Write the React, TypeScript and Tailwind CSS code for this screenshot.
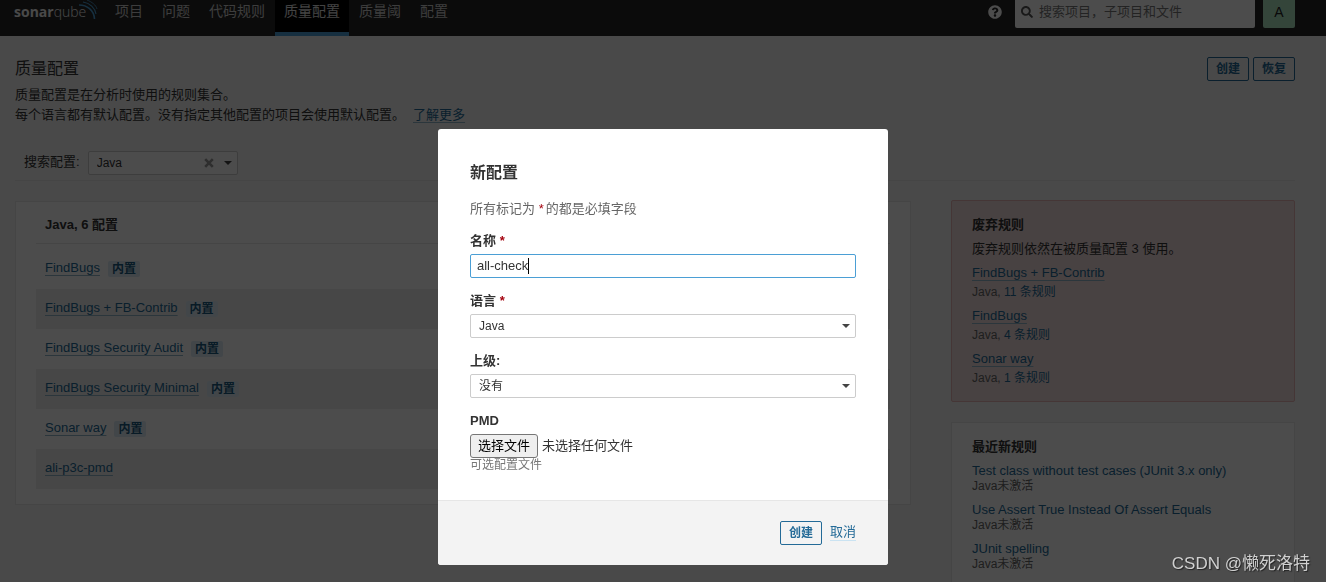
import { FaQuestionCircle, FaSearch } from "react-icons/fa";

const navItems = ["项目", "问题", "代码规则", "质量配置", "质量阈", "配置"];

const profiles = [
  { name: "FindBugs", builtIn: true },
  { name: "FindBugs + FB-Contrib", builtIn: true },
  { name: "FindBugs Security Audit", builtIn: true },
  { name: "FindBugs Security Minimal", builtIn: true },
  { name: "Sonar way", builtIn: true },
  { name: "ali-p3c-pmd", builtIn: false },
];

const deprecated = [
  { name: "FindBugs + FB-Contrib", rules: 11 },
  { name: "FindBugs", rules: 4 },
  { name: "Sonar way", rules: 1 },
];

const latestRules = [
  "Test class without test cases (JUnit 3.x only)",
  "Use Assert True Instead Of Assert Equals",
  "JUnit spelling",
];

export default function App() {
  return (
    <div className="h-screen overflow-hidden bg-[#f3f3f3] font-['Liberation_Sans','Noto_Sans_CJK_SC',sans-serif] text-[13px] leading-5 text-[#333]">
      <Navbar />
      <main className="pt-[21px] pr-[31px] pl-[15px]">
        <PageHeader />
        <div className="flex items-center border-b border-[#e6e6e6] pt-[26px] pb-[5px] pl-[9px]">
          <label htmlFor="search-language" className="mr-2 pb-0.5">搜索配置:</label>
          <div className="flex h-6 w-[150px] items-center rounded-xs border border-[#ccc] bg-white pr-[5px] pl-2">
            <select id="search-language" className="min-w-0 flex-1 appearance-none text-xs outline-none">
              <option>Java</option>
            </select>
            <button type="button" aria-label="清除" className="mr-2.5 text-[#999]">
              <svg width="10" height="10" viewBox="0 0 10 10" fill="none" stroke="currentColor" strokeWidth="2.6">
                <path d="M1.2 1.2L8.8 8.8M8.8 1.2L1.2 8.8" />
              </svg>
            </button>
            <Caret />
          </div>
        </div>
        <div className="mt-[19px] flex items-start gap-10">
          <ProfileList />
          <aside className="w-[344px] shrink-0 space-y-5">
            <DeprecatedRules />
            <LatestRules />
          </aside>
        </div>
      </main>
      <div className="fixed inset-0 flex items-start justify-center bg-black/70 pt-[129px]">
        <CreateDialog />
      </div>
      <div className="fixed right-4 bottom-1.5 text-[17px] leading-6 text-[#d0d0d0] text-shadow-[1px_1px_1px_#222]">
        CSDN @懒死洛特
      </div>
    </div>
  );
}

function Navbar() {
  return (
    <header className="-mt-3 flex h-12 items-center bg-[#262626] pr-[31px] pl-3.5">
      <a href="#" aria-label="sonarqube" className="flex w-[92px] items-center font-['Open_Sans',sans-serif] text-sm text-[#f4f4f4]">
        <span className="font-bold">sonar</span>
        <span className="font-light">qube</span>
        <svg width="20" height="24" viewBox="0 0 20 24" className="-ml-2 mb-2 shrink-0" fill="none" stroke="#4b9fd5">
          <path d="M1 9C9 9 16 14 16.5 23" strokeWidth="1.6" />
          <path d="M5 6C12 7 17 12 18 18" strokeWidth="1.1" />
          <path d="M9 4C14 6 18 9 19 13" strokeWidth="0.8" />
        </svg>
      </a>
      <nav className="flex h-full gap-px text-sm">
        {navItems.map((item) => (
          <a
            key={item}
            href="#"
            className={
              item === "质量配置"
                ? "flex items-center border-b-4 border-[#4b9fd5] bg-black px-[9px] pt-0.5 text-[#e1e1e1]"
                : "flex items-center px-[9px] pb-0.5 text-[#ccc]"
            }
          >
            {item}
          </a>
        ))}
      </nav>
      <button type="button" aria-label="帮助" className="ml-auto text-white">
        <FaQuestionCircle size={14} />
      </button>
      <div className="ml-[13px] flex h-8 w-60 items-center rounded-xs bg-white pl-1.5">
        <FaSearch size={12} className="text-[#555]" />
        <input
          type="search"
          aria-label="搜索"
          placeholder="搜索项目，子项目和文件"
          className="ml-1.5 min-w-0 flex-1 outline-none placeholder:text-[#777]"
        />
      </div>
      <button type="button" className="ml-2 size-8 rounded-xs bg-[#b0e8c4] text-sm text-[#222]">
        A
      </button>
    </header>
  );
}

function PageHeader() {
  return (
    <div className="flex items-start justify-between">
      <div>
        <h1 className="text-base leading-6">质量配置</h1>
        <p className="mt-1">
          质量配置是在分析时使用的规则集合。
          <br />
          <span className="mr-2">每个语言都有默认配置。没有指定其他配置的项目会使用默认配置。</span>
          <TextLink>了解更多</TextLink>
        </p>
      </div>
      <div className="flex gap-1">
        <OutlineButton>创建</OutlineButton>
        <OutlineButton>恢复</OutlineButton>
      </div>
    </div>
  );
}

function ProfileList() {
  return (
    <section className="mt-px min-w-0 flex-1 border border-[#e6e6e6] bg-white px-5 pt-[13px] pb-[15px]">
      <table className="w-full">
        <caption className="mb-[5px] border-b border-[#e6e6e6] pb-2 pl-[9px] text-left font-bold">Java, 6 配置</caption>
        <tbody>
          {profiles.map((profile) => (
            <tr key={profile.name} className="h-10 even:bg-[#ededed]">
              <td className="pl-[9px]">
                <div className="flex items-center gap-2">
                  <div className="pb-0.5"><TextLink>{profile.name}</TextLink></div>
                  {profile.builtIn && (
                    <span className="rounded-xs bg-[#dcecf6] px-1 text-xs leading-4 font-bold text-[#1b5a80]">内置</span>
                  )}
                </div>
              </td>
            </tr>
          ))}
        </tbody>
      </table>
    </section>
  );
}

function DeprecatedRules() {
  return (
    <section className="rounded-xs border border-[#e8b4b4] bg-[#f2dede] px-5 py-[14px]">
      <h2 className="font-bold">废弃规则</h2>
      <p className="mt-1">废弃规则依然在被质量配置 3 使用。</p>
      <ul className="mt-1 space-y-[5px]">
        {deprecated.map((item) => (
          <li key={item.name}>
            <div><TextLink>{item.name}</TextLink></div>
            <div className="text-xs leading-[18px] text-[#666]">
              Java, <a href="#" className="text-[#236a97]">{item.rules} 条规则</a>
            </div>
          </li>
        ))}
      </ul>
    </section>
  );
}

function LatestRules() {
  return (
    <section className="border border-[#e6e6e6] bg-white px-5 pt-[14px] pb-8">
      <h2 className="font-bold">最近新规则</h2>
      <ul className="mt-1.5 space-y-2">
        {latestRules.map((rule) => (
          <li key={rule}>
            <a href="#" className="block leading-4 text-[#236a97]">{rule}</a>
            <div className="text-xs leading-[15px] text-[#666]">Java未激活</div>
          </li>
        ))}
      </ul>
    </section>
  );
}

function CreateDialog() {
  return (
    <form role="dialog" aria-labelledby="dialog-title" className="w-[450px] overflow-hidden rounded-[3px] bg-white">
      <div className="px-8 pt-8 pb-7">
        <h2 id="dialog-title" className="text-base leading-6 font-bold">新配置</h2>
        <p className="mt-3.5 text-[#666]">
          所有标记为 <span className="mr-0.5"><Required /></span>的都是必填字段
        </p>
        <div className="mt-3 space-y-[13px]">
          <div>
            <label htmlFor="name" className="mb-[3px] block font-bold">名称 <Required /></label>
            <div className="relative">
              <input
                id="name"
                defaultValue="all-check"
                className="block h-6 w-full rounded-xs border border-[#4b9fd5] px-1.5 pb-0.5 caret-transparent outline-none"
              />
              {/* text cursor */}
              <span className="absolute top-1 left-[58px] h-4 w-px bg-black" />
            </div>
          </div>
          <SelectField id="language" value="Java">语言 <Required /></SelectField>
          <SelectField id="parent" value="没有">上级:</SelectField>
          <div>
            <label htmlFor="pmd" className="mb-[3px] block font-bold">PMD</label>
            <div className="flex items-center gap-1">
              <input id="pmd" type="file" className="sr-only" />
              <label htmlFor="pmd" className="h-6 rounded-[3px] border border-[#767676] bg-[#efefef] px-[7px] leading-[22px] text-black">
                选择文件
              </label>
              <span>未选择任何文件</span>
            </div>
            <p className="text-xs leading-[14px] text-[#777]">可选配置文件</p>
          </div>
        </div>
      </div>
      <footer className="flex items-center justify-end gap-2 border-t border-[#e6e6e6] bg-[#f3f3f3] px-8 py-5">
        <OutlineButton>创建</OutlineButton>
        <div className="pb-0.5">
          <a href="#" className="text-[#236a97] underline decoration-[#cae3f2] underline-offset-4">取消</a>
        </div>
      </footer>
    </form>
  );
}

function SelectField({ id, value, children }: { id: string; value: string; children: React.ReactNode }) {
  return (
    <div>
      <label htmlFor={id} className="mb-[3px] block font-bold">{children}</label>
      <div className="flex h-6 items-center rounded-xs border border-[#ccc] bg-white pr-[5px] pl-2">
        <select id={id} className="min-w-0 flex-1 appearance-none text-xs outline-none">
          <option>{value}</option>
        </select>
        <Caret />
      </div>
    </div>
  );
}

function OutlineButton({ children }: { children: React.ReactNode }) {
  return (
    <button type="button" className="h-6 rounded-xs border border-[#236a97] px-2 text-xs font-bold text-[#236a97]">
      {children}
    </button>
  );
}

function TextLink({ children }: { children: React.ReactNode }) {
  return (
    <a
      href="#"
      className="text-[#236a97] underline decoration-[#8fb4c8] decoration-1 underline-offset-3 [text-decoration-skip-ink:none]"
    >
      {children}
    </a>
  );
}

function Required() {
  return <em className="text-[#a4030f] not-italic">*</em>;
}

function Caret() {
  return (
    <svg width="8" height="4" viewBox="0 0 8 4" className="pointer-events-none shrink-0" fill="#444">
      <path d="M0 0H8L4 4Z" />
    </svg>
  );
}
